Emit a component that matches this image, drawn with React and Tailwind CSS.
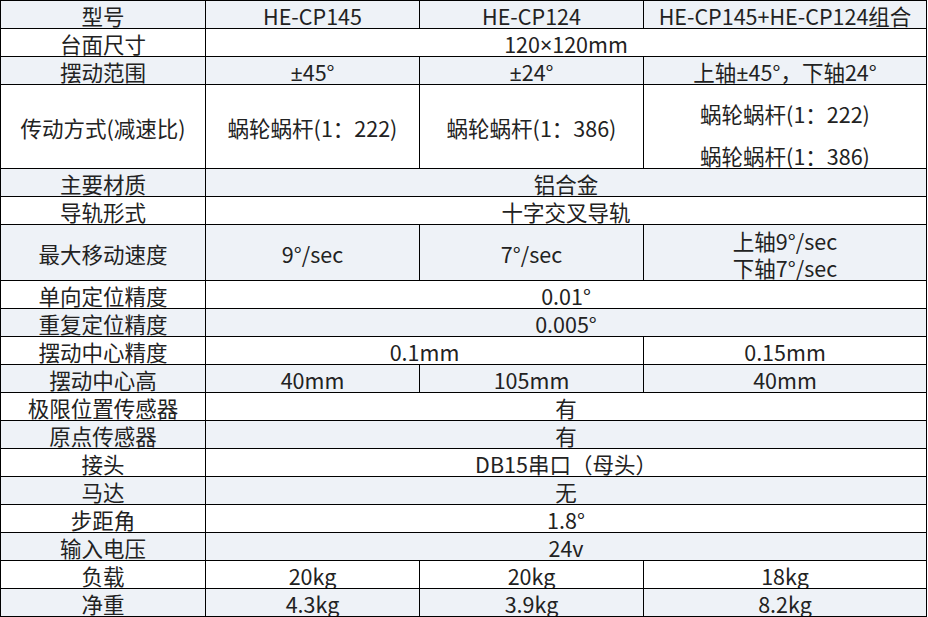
import React from 'react';

const COLS = 'grid grid-cols-[205px_214px_224px_283px]';

// each row: label, cells, optional height; a cell's text may be a list of lines
const ROWS = [
  { label: '型号', cells: [{ t: 'HE-CP145' }, { t: 'HE-CP124' }, { t: 'HE-CP145+HE-CP124组合' }] },
  { label: '台面尺寸', cells: [{ t: '120×120mm', span: 3 }] },
  { label: '摆动范围', cells: [{ t: '±45°' }, { t: '±24°' }, { t: '上轴±45°，下轴24°' }] },
  {
    label: '传动方式(减速比)',
    h: 'h-[84px]',
    cells: [
      { t: '蜗轮蜗杆(1：222)' },
      { t: '蜗轮蜗杆(1：386)' },
      { t: ['蜗轮蜗杆(1：222)', '蜗轮蜗杆(1：386)'], extra: 'gap-[18px] pt-[17px] leading-[24px]' },
    ],
  },
  { label: '主要材质', cells: [{ t: '铝合金', span: 3 }] },
  { label: '导轨形式', cells: [{ t: '十字交叉导轨', span: 3 }] },
  {
    label: '最大移动速度',
    h: 'h-[56px]',
    cells: [{ t: '9°/sec' }, { t: '7°/sec' }, { t: ['上轴9°/sec', '下轴7°/sec'], extra: 'leading-[27px] pt-[2px]' }],
  },
  { label: '单向定位精度', cells: [{ t: '0.01°', span: 3 }] },
  { label: '重复定位精度', cells: [{ t: '0.005°', span: 3 }] },
  { label: '摆动中心精度', cells: [{ t: '0.1mm', span: 2 }, { t: '0.15mm' }] },
  { label: '摆动中心高', cells: [{ t: '40mm' }, { t: '105mm' }, { t: '40mm' }] },
  { label: '极限位置传感器', cells: [{ t: '有', span: 3 }] },
  { label: '原点传感器', cells: [{ t: '有', span: 3 }] },
  { label: '接头', cells: [{ t: 'DB15串口（母头）', span: 3 }] },
  { label: '马达', cells: [{ t: '无', span: 3 }] },
  { label: '步距角', cells: [{ t: '1.8°', span: 3 }] },
  { label: '输入电压', cells: [{ t: '24v', span: 3 }] },
  { label: '负载', cells: [{ t: '20kg' }, { t: '20kg' }, { t: '18kg' }] },
  { label: '净重', cells: [{ t: '4.3kg' }, { t: '3.9kg' }, { t: '8.2kg' }] },
];

// ± and × are full width in the CJK font, the picture has the narrow ones
function Txt({ s }) {
  return (
    <span>
      {s.split(/([±×])/).map((p, i) =>
        p === '±' || p === '×' ? (
          <span key={i} className="font-['Noto_Sans']">{p}</span>
        ) : (
          p
        )
      )}
    </span>
  );
}

function Cell({ children, span, extra }) {
  return (
    <div
      className={
        'flex flex-col items-center justify-center border-r border-b border-black whitespace-nowrap overflow-hidden ' +
        (span === 3 ? 'col-span-3 ' : span === 2 ? 'col-span-2 ' : '') +
        (extra || 'pt-[3px] leading-[24px]')
      }
    >
      {children}
    </div>
  );
}

export default function App() {
  return (
    <div
      className="w-[928px] h-[617px] bg-white text-[#222] text-[21.5px]"
      style={{ fontFamily: '"Noto Sans CJK SC", "Noto Sans", sans-serif' }}
    >
      <div className="w-[927px] border-t border-l border-black">
        {ROWS.map((r, i) => (
          <div
            key={i}
            className={COLS + ' ' + (r.h || 'h-[28px]') + ' ' + (i % 2 === 0 ? 'bg-[#eef2f7]' : 'bg-white')}
          >
            <Cell>{r.label}</Cell>
            {r.cells.map((c, j) => (
              <Cell key={j} span={c.span} extra={c.extra}>
                {Array.isArray(c.t) ? c.t.map((l, k) => <Txt key={k} s={l} />) : <Txt s={c.t} />}
              </Cell>
            ))}
          </div>
        ))}
      </div>
    </div>
  );
}
